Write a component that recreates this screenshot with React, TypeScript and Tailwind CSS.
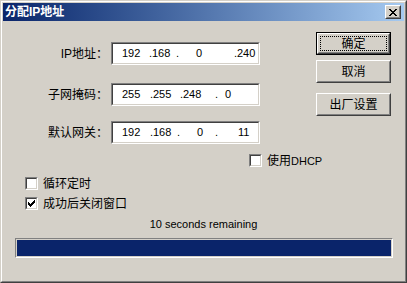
const font = { fontFamily: '"Liberation Sans", "Noto Sans CJK SC", sans-serif' };

const sunkenOuter = "border border-t-[#808080] border-l-[#808080] border-r-white border-b-white";
const sunkenInner = "border border-t-[#404040] border-l-[#404040] border-r-[#d4d0c8] border-b-[#d4d0c8]";
const raisedOuter = "border border-t-white border-l-white border-r-[#404040] border-b-[#404040]";
const raisedInner = "border border-t-[#d4d0c8] border-l-[#d4d0c8] border-r-[#808080] border-b-[#808080]";

type Seg = [string, string];

const fields: { label: string; rowClass: string; segs: Seg[] }[] = [
  {
    label: "IP地址：",
    rowClass: "mt-[21px]",
    segs: [
      ["192", "w-[27px]"],
      [".", "w-[3px]"],
      ["168", "w-[24px]"],
      [".", "w-[20px]"],
      ["0", "w-[38px]"],
      [".", "w-[3px]"],
      ["240", "w-[24px]"],
    ],
  },
  {
    label: "子网掩码：",
    rowClass: "mt-[18px]",
    segs: [
      ["255", "w-[28px]"],
      [".", "w-[3px]"],
      ["255", "w-[27px]"],
      [".", "w-[3px]"],
      ["248", "w-[32px]"],
      [".", "w-[10px]"],
      ["0", "w-[10px]"],
    ],
  },
  {
    label: "默认网关：",
    rowClass: "mt-[15px]",
    segs: [
      ["192", "w-[28px]"],
      [".", "w-[3px]"],
      ["168", "w-[24px]"],
      [".", "w-[20px]"],
      ["0", "w-[18px]"],
      [".", "w-[23px]"],
      ["11", "w-[16px]"],
    ],
  },
];

const CheckBox = ({ checked }: { checked?: boolean }) => (
  <div className={`w-[13px] h-[13px] shrink-0 ${sunkenOuter}`}>
    <div className={`w-full h-full bg-white flex items-center justify-center ${sunkenInner}`}>
      {checked && (
        <svg width="7" height="7" viewBox="0 0 7 7" shapeRendering="crispEdges">
          <path d="M6 0h1v3h-1v1h-1v1h-1v1h-1v1h-1v-1h-1v-1h-1v-3h1v1h1v1h1v-1h1v-1h1z" fill="#000" />
        </svg>
      )}
    </div>
  </div>
);

const Button = ({ label, isDefault }: { label: string; isDefault?: boolean }) => {
  if (isDefault) {
    return (
      <div className="w-[75px] h-[23px] border border-black">
        <div className={`w-full h-full ${raisedOuter}`}>
          <div className={`w-full h-full p-px ${raisedInner}`}>
            <div className="w-full h-full border border-dotted border-black flex items-center justify-center text-[12px] text-black">
              {label}
            </div>
          </div>
        </div>
      </div>
    );
  }
  return (
    <div className={`w-[75px] h-[23px] ${raisedOuter}`}>
      <div className={`w-full h-full flex items-center justify-center text-[12px] text-black ${raisedInner}`}>
        {label}
      </div>
    </div>
  );
};

export default function App() {
  return (
    <div style={font} className="w-[407px] h-[283px] overflow-hidden bg-white">
      <div className="w-[407px] h-[283px] border border-t-[#d4d0c8] border-l-[#d4d0c8] border-r-[#404040] border-b-[#404040]">
        <div className="w-full h-full border border-t-white border-l-white border-r-[#808080] border-b-[#808080] bg-[#d4d0c8] p-px flex flex-col">
          {/* title bar */}
          <div className="h-[18px] shrink-0 flex items-center bg-linear-to-r from-[#0a246a] to-[#a6caf0] pl-[2px] pr-[3px]">
            <span className="text-white font-bold text-[12px] leading-none">分配IP地址</span>
            <div className={`ml-auto w-[16px] h-[14px] bg-[#d4d0c8] ${raisedOuter}`}>
              <div className={`w-full h-full flex items-center justify-center ${raisedInner}`}>
                <svg width="8" height="7" viewBox="0 0 8 7" shapeRendering="crispEdges">
                  <path d="M0 0h2v1h1v1h2v-1h1v-1h2v1h-1v1h-1v1h-1v1h1v1h1v1h1v1h-2v-1h-1v-1h-2v1h-1v1h-2v-1h1v-1h1v-1h1v-1h-1v-1h-1v-1h-1z" fill="#000" />
                </svg>
              </div>
            </div>
          </div>

          {/* body */}
          <div className="flex-1 flex flex-col text-black">
            <div className="flex">
              <div className="flex flex-col w-[257px]">
                {fields.map((f) => (
                  <div key={f.label} className={`flex items-center h-[23px] ${f.rowClass}`}>
                    <div className="w-[105px] text-right text-[12px] whitespace-nowrap">{f.label}</div>
                    <div className={`ml-[3px] w-[149px] h-[23px] ${sunkenOuter}`}>
                      <div className={`w-full h-full bg-white flex items-center pl-[9px] text-[11px] ${sunkenInner}`}>
                        {f.segs.map(([t, w], i) => (
                          <span key={i} className={`${w} shrink-0 whitespace-nowrap`}>
                            {t}
                          </span>
                        ))}
                      </div>
                    </div>
                  </div>
                ))}
              </div>
              <div className="ml-[56px] mt-[11px] flex flex-col">
                <Button label="确定" isDefault />
                <div className="mt-[5px]">
                  <Button label="取消" />
                </div>
                <div className="mt-[10px]">
                  <Button label="出厂设置" />
                </div>
              </div>
            </div>

            <div className="mt-[10px] ml-[246px] flex items-center h-[13px]">
              <CheckBox />
              <span className="ml-[5px] text-[12px] whitespace-nowrap">
                使用<span className="text-[11px]">DHCP</span>
              </span>
            </div>

            <div className="mt-[10px] ml-[22px] flex items-center h-[13px]">
              <CheckBox />
              <span className="ml-[5px] text-[12px] whitespace-nowrap">循环定时</span>
            </div>
            <div className="mt-[7px] ml-[22px] flex items-center h-[13px]">
              <CheckBox checked />
              <span className="ml-[5px] text-[12px] whitespace-nowrap">成功后关闭窗口</span>
            </div>

            <div className="mt-[8px] h-[13px] flex items-center justify-center text-[11px]">
              10 seconds remaining
            </div>

            <div className="mt-[7px] ml-[12px] w-[378px] h-[20px] border border-t-[#808080] border-l-[#808080] border-r-white border-b-white p-px">
              <div className="w-full h-full bg-[#0a246a]" />
            </div>
          </div>
        </div>
      </div>
    </div>
  );
}
